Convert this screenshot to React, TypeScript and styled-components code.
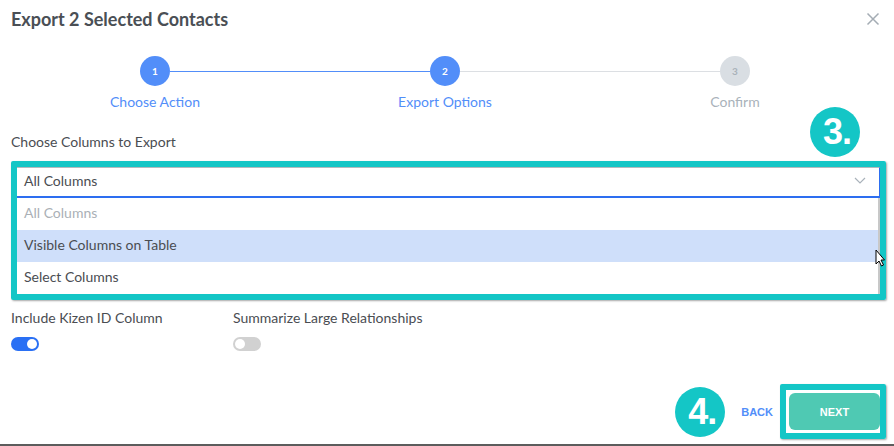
import React from 'react';
import styled, { createGlobalStyle } from 'styled-components';

const GlobalStyle = createGlobalStyle`
  html, body {
    margin: 0;
    padding: 0;
    background: #ffffff;
  }
  body {
    font-family: Lato, 'Open Sans', sans-serif;
    color: #4a4d52;
  }
  * {
    box-sizing: border-box;
  }
`;

const BLUE = '#528ef9';
const TEAL = '#14c6c6';
const MUTED = '#a9b2ba';

const Modal = styled.div`
  width: 894px;
  height: 446px;
  position: relative;
  display: flex;
  flex-direction: column;
  border-bottom: 2px solid #5c5c5c;
  overflow: hidden;
`;

const Header = styled.div`
  display: flex;
  justify-content: space-between;
  align-items: center;
  height: 38px;
  padding: 0 14px 0 11px;
`;

const Title = styled.h1`
  margin: 0;
  font-size: 18px;
  font-weight: 700;
  color: #4a4f55;
`;

const CloseButton = styled.button`
  border: none;
  background: none;
  padding: 0;
  width: 14px;
  height: 14px;
  display: flex;
  cursor: pointer;
`;

const Stepper = styled.div`
  display: grid;
  grid-template-columns: repeat(3, 290px);
  margin: 18px 0 0 10px;
`;

const Step = styled.div`
  display: flex;
  flex-direction: column;
  align-items: center;
`;

const Track = styled.div`
  display: flex;
  align-items: center;
  width: 100%;
  height: 30px;
`;

const Line = styled.div<{ $color?: string }>`
  flex: 1;
  height: 1px;
  background: ${(p) => p.$color || 'transparent'};
`;

const Circle = styled.div<{ $active: boolean }>`
  width: 30px;
  height: 30px;
  border-radius: 50%;
  display: flex;
  align-items: center;
  justify-content: center;
  font-size: 10px;
  font-weight: 700;
  color: ${(p) => (p.$active ? '#ffffff' : MUTED)};
  background: ${(p) => (p.$active ? BLUE : '#d9dee3')};
`;

const StepLabel = styled.div<{ $active: boolean }>`
  margin-top: 8px;
  font-size: 14px;
  line-height: 16px;
  color: ${(p) => (p.$active ? BLUE : MUTED)};
`;

const FieldLabel = styled.div`
  margin: 24px 0 0 11px;
  font-size: 14px;
  line-height: 16px;
  color: #4a4d52;
`;

const Highlight = styled.div`
  position: relative;
  margin: 11px 0 0 11px;
  width: 875px;
  border: 6px solid ${TEAL};
  border-radius: 2px;
  box-shadow: 1px 1px 2px rgba(0, 0, 0, 0.35);
`;

const Badge = styled.div`
  width: 50px;
  height: 50px;
  border-radius: 50%;
  background: ${TEAL};
  color: #ffffff;
  display: flex;
  align-items: center;
  justify-content: center;
  font-family: 'Liberation Sans', Arial, sans-serif;
  font-weight: 700;
  font-size: 36px;
  letter-spacing: -1px;
  padding-left: 4px;
`;

const FloatingBadge = styled(Badge)`
  position: absolute;
  right: 20px;
  top: -60px;
`;

const SelectControl = styled.div`
  display: flex;
  align-items: center;
  justify-content: space-between;
  height: 31px;
  padding: 0 13px 3px 7px;
  border-top: 1px solid #b5b9bd;
  border-right: 1px solid #2d6ef0;
  border-bottom: 2px solid #2d6ef0;
  font-size: 14px;
  color: #4a4d52;
`;

const Options = styled.div`
  border-right: 2px solid #c8c8c8;
`;

const Option = styled.div<{ $muted?: boolean; $hovered?: boolean }>`
  height: 32px;
  display: flex;
  align-items: center;
  padding: 0 0 3px 7px;
  font-size: 14px;
  color: ${(p) => (p.$muted ? '#aab0b6' : '#4a4d52')};
  background: ${(p) => (p.$hovered ? '#cfdffa' : '#ffffff')};
`;

const Cursor = styled.svg`
  position: absolute;
  right: -5px;
  top: 82px;
`;

const ToggleRow = styled.div`
  display: grid;
  grid-template-columns: 222px 222px;
  margin: 10px 0 0 11px;
`;

const ToggleField = styled.div`
  display: flex;
  flex-direction: column;
  gap: 11px;
`;

const ToggleLabel = styled.div`
  font-size: 14px;
  line-height: 16px;
  color: #4a4d52;
`;

const Toggle = styled.div<{ $on: boolean }>`
  width: 28px;
  height: 14px;
  border-radius: 7px;
  background: ${(p) => (p.$on ? '#2a70f4' : '#d1d1d1')};
  display: flex;
  align-items: center;
  justify-content: ${(p) => (p.$on ? 'flex-end' : 'flex-start')};
  padding: 0 2px;

  &::after {
    content: '';
    width: 10px;
    height: 10px;
    border-radius: 50%;
    background: #ffffff;
  }
`;

const Footer = styled.div`
  display: flex;
  justify-content: flex-end;
  align-items: center;
  margin-top: auto;
  padding: 0 8px 5px 0;
`;

const BackButton = styled.button`
  border: none;
  background: none;
  padding: 0;
  margin: 0 7px 0 16px;
  font-family: 'Liberation Sans', Arial, sans-serif;
  font-size: 11px;
  font-weight: 700;
  color: ${BLUE};
  cursor: pointer;
`;

const NextFrame = styled.div`
  border: 6px solid ${TEAL};
  border-radius: 2px;
  padding: 3px 0 3px 3px;
  box-shadow: 1px 1px 2px rgba(0, 0, 0, 0.35);
`;

const NextButton = styled.button`
  width: 91px;
  height: 37px;
  border: none;
  border-radius: 6px;
  background: #4fc9b3;
  color: #ffffff;
  font-family: 'Liberation Sans', Arial, sans-serif;
  font-size: 11px;
  font-weight: 700;
  cursor: pointer;
`;

const steps = [
  { n: 1, label: 'Choose Action', active: true },
  { n: 2, label: 'Export Options', active: true },
  { n: 3, label: 'Confirm', active: false },
];

const lineColor = (i: number, side: 'left' | 'right') => {
  if (side === 'left' && i === 0) return undefined;
  if (side === 'right' && i === steps.length - 1) return undefined;
  const segment = side === 'left' ? i - 1 : i;
  return steps[segment + 1].active ? BLUE : '#dcdfe3';
};

const App = () => {
  return (
    <>
      <GlobalStyle />
      <Modal>
        <Header>
          <Title>Export 2 Selected Contacts</Title>
          <CloseButton aria-label='close'>
            <svg width='14' height='14' viewBox='0 0 14 14'>
              <path d='M1.5 1.5 L12.5 12.5 M12.5 1.5 L1.5 12.5' stroke='#a4acb4' strokeWidth='1.5' />
            </svg>
          </CloseButton>
        </Header>

        <Stepper>
          {steps.map((s, i) => (
            <Step key={s.n}>
              <Track>
                <Line $color={lineColor(i, 'left')} />
                <Circle $active={s.active}>{s.n}</Circle>
                <Line $color={lineColor(i, 'right')} />
              </Track>
              <StepLabel $active={s.active}>{s.label}</StepLabel>
            </Step>
          ))}
        </Stepper>

        <FieldLabel>Choose Columns to Export</FieldLabel>
        <Highlight>
          <FloatingBadge>3.</FloatingBadge>
          <SelectControl>
            <span>All Columns</span>
            <svg width='12' height='7' viewBox='0 0 12 7'>
              <path d='M1 1 L6 6 L11 1' fill='none' stroke='#a9b2ba' strokeWidth='1.2' />
            </svg>
          </SelectControl>
          <Options>
            <Option $muted>All Columns</Option>
            <Option $hovered>Visible Columns on Table</Option>
            <Option>Select Columns</Option>
          </Options>
          <Cursor width='10' height='18' viewBox='0 0 10 18'>
            <path d='M1 1 L1 15 L4 12 L6.5 17 L8.5 16 L6 11 L9.5 11 Z' fill='#ffffff' stroke='#000000' strokeWidth='1' />
          </Cursor>
        </Highlight>

        <ToggleRow>
          <ToggleField>
            <ToggleLabel>Include Kizen ID Column</ToggleLabel>
            <Toggle $on />
          </ToggleField>
          <ToggleField>
            <ToggleLabel>Summarize Large Relationships</ToggleLabel>
            <Toggle $on={false} />
          </ToggleField>
        </ToggleRow>

        <Footer>
          <Badge>4.</Badge>
          <BackButton>BACK</BackButton>
          <NextFrame>
            <NextButton>NEXT</NextButton>
          </NextFrame>
        </Footer>
      </Modal>
    </>
  );
};

export default App;
